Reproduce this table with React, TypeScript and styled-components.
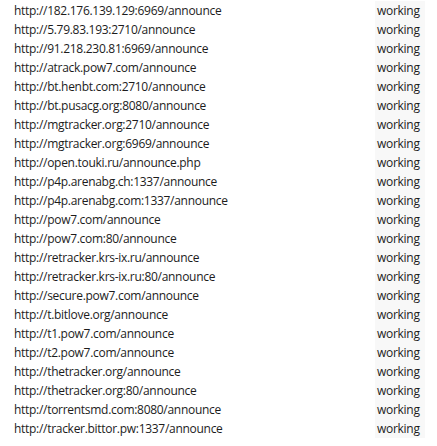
import React from "react";
import styled, { createGlobalStyle } from "styled-components";

const GlobalStyle = createGlobalStyle`
  html, body {
    margin: 0;
    padding: 0;
    background: #ffffff;
  }
`;

const Table = styled.div`
  display: grid;
  grid-template-columns: 1fr 50px;
  width: 437px;
  padding: 1px 12px 0 14px;
  box-sizing: border-box;
  font-family: "Open Sans", "Noto Sans", sans-serif;
  font-size: 12px;
  letter-spacing: -0.29px;
  color: #1c1c1c;
`;

const Cell = styled.div<{ $status?: boolean }>`
  height: 19px;
  line-height: 19px;
  white-space: nowrap;
  overflow: hidden;
  background: ${(p) => (p.$status ? "#f8f8f8" : "transparent")};
  padding-left: ${(p) => (p.$status ? "2px" : "0")};
`;

const trackers = [
  "http://182.176.139.129:6969/announce",
  "http://5.79.83.193:2710/announce",
  "http://91.218.230.81:6969/announce",
  "http://atrack.pow7.com/announce",
  "http://bt.henbt.com:2710/announce",
  "http://bt.pusacg.org:8080/announce",
  "http://mgtracker.org:2710/announce",
  "http://mgtracker.org:6969/announce",
  "http://open.touki.ru/announce.php",
  "http://p4p.arenabg.ch:1337/announce",
  "http://p4p.arenabg.com:1337/announce",
  "http://pow7.com/announce",
  "http://pow7.com:80/announce",
  "http://retracker.krs-ix.ru/announce",
  "http://retracker.krs-ix.ru:80/announce",
  "http://secure.pow7.com/announce",
  "http://t.bitlove.org/announce",
  "http://t1.pow7.com/announce",
  "http://t2.pow7.com/announce",
  "http://thetracker.org/announce",
  "http://thetracker.org:80/announce",
  "http://torrentsmd.com:8080/announce",
  "http://tracker.bittor.pw:1337/announce",
];

export default function App() {
  return (
    <>
      <GlobalStyle />
      <Table>
        {trackers.map((url) => (
          <React.Fragment key={url}>
            <Cell>{url}</Cell>
            <Cell $status>working</Cell>
          </React.Fragment>
        ))}
      </Table>
    </>
  );
}
